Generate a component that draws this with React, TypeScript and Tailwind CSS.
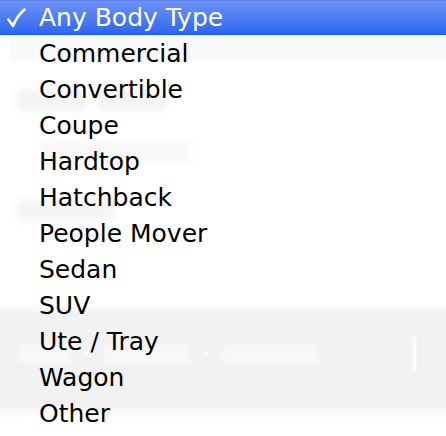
import React from "react";

const items = [
  "Commercial",
  "Convertible",
  "Coupe",
  "Hardtop",
  "Hatchback",
  "People Mover",
  "Sedan",
  "SUV",
  "Ute / Tray",
  "Wagon",
  "Other",
];

export default function App() {
  return (
    <div
      className="relative w-[446px] h-[436px] overflow-hidden bg-white"
      style={{ fontFamily: '"DejaVu Sans", "Lucida Grande", sans-serif' }}
    >
      {/* faint page content seen through the translucent menu */}
      <div className="flex flex-col h-full" aria-hidden="true">
        <div className="h-[36px]" />
        <div className="h-[26px] ml-[10px] bg-[#f8f9fb] blur-[1px]" />
        <div className="h-[28px]" />
        <div className="flex gap-[10px] pl-[16px]">
          <div className="w-[70px] h-[20px] bg-[#f4f4f4] blur-[3px] rounded" />
          <div className="w-[70px] h-[20px] bg-[#f4f4f4] blur-[3px] rounded" />
        </div>
        <div className="h-[32px]" />
        <div className="ml-[40px] w-[150px] h-[20px] bg-[#f8f8f8] blur-[3px]" />
        <div className="h-[38px]" />
        <div className="ml-[16px] w-[100px] h-[20px] bg-[#f5f5f5] blur-[3px] rounded" />
        <div className="h-[84px]" />
        <div className="h-[100px] bg-gradient-to-b from-white from-0% via-[#f2f2f2] via-10% to-[#f2f2f2] flex items-center pl-[20px] pr-[30px] gap-[14px]">
          <div className="w-[50px] h-[18px] bg-[#f8f8f8] blur-[3px]" />
          <div className="w-[6px] h-[6px] bg-[#f8f8f8] blur-[1px] rounded-full" />
          <div className="w-[85px] h-[18px] bg-[#f8f8f8] blur-[3px]" />
          <div className="w-[6px] h-[6px] bg-[#f8f8f8] blur-[1px] rounded-full" />
          <div className="w-[95px] h-[18px] bg-[#f8f8f8] blur-[3px]" />
          <div className="flex-1" />
          <div className="w-[3px] h-[36px] bg-white blur-[1px]" />
        </div>
        <div className="h-[14px] bg-gradient-to-b from-[#f2f2f2] to-white" />
      </div>

      {/* the pop-up menu */}
      <div className="absolute inset-x-0 top-0 flex flex-col">
        <div className="flex items-center h-[35px] border-t border-[#5b80ea] border-b border-b-[#1d58ea] bg-gradient-to-b from-[#6d92f6] to-[#2c66f0] text-white text-[25px] leading-none">
          <span className="w-[39px] pl-[7px] flex items-center">
            <svg width="19" height="20" viewBox="0 0 19 20" fill="none">
              <path
                d="M1.5 11.5 L6 18 Q10 8 17.5 1.5"
                stroke="white"
                strokeWidth="2.6"
                strokeLinecap="round"
                strokeLinejoin="round"
              />
            </svg>
          </span>
          <span className="pb-[1px]">Any Body Type</span>
        </div>
        {items.map((t) => (
          <div
            key={t}
            className="flex items-center h-[36px] pl-[39px] text-[25px] leading-none text-black"
          >
            {t}
          </div>
        ))}
      </div>
    </div>
  );
}
